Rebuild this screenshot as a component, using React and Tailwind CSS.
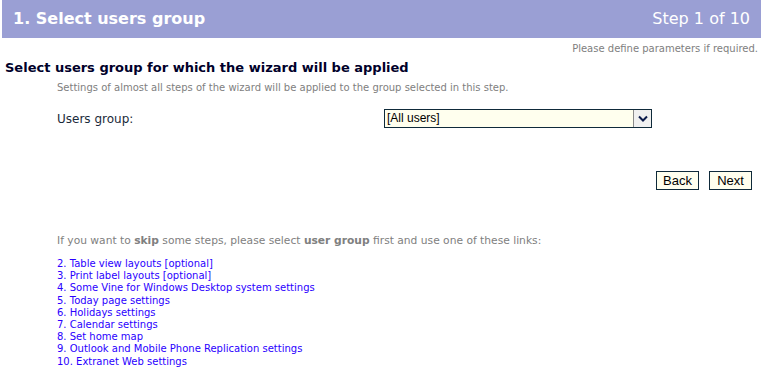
const links = [
  '2. Table view layouts [optional]',
  '3. Print label layouts [optional]',
  '4. Some Vine for Windows Desktop system settings',
  '5. Today page settings',
  '6. Holidays settings',
  '7. Calendar settings',
  '8. Set home map',
  '9. Outlook and Mobile Phone Replication settings',
  '10. Extranet Web settings',
];

export default function App() {
  return (
    <div className="h-[375px] w-[761px] overflow-hidden bg-white font-['DejaVu_Sans',Verdana,sans-serif]">
      <div className="ml-[2px] flex h-[38px] items-center justify-between bg-[#9a9fd4] pl-[11px] pr-[11px] text-white">
        <span className="text-[16px] font-bold">1. Select users group</span>
        <span className="text-[16px]">Step 1 of 10</span>
      </div>
      <div className="pr-[3px] pt-[4px] text-right text-[10px] leading-[13px] text-[#808080]">
        Please define parameters if required.
      </div>
      <h1 className="mt-[5px] pl-[5px] text-[13px] font-bold leading-[16px] text-[#00002a]">
        Select users group for which the wizard will be applied
      </h1>
      <p className="mt-[5px] pl-[57px] text-[10px] leading-[13px] text-[#808080]">
        Settings of almost all steps of the wizard will be applied to the group selected in this step.
      </p>
      <div className="mt-[15px] flex items-center">
        <label className="w-[384px] pl-[57px] text-[12px] text-[#1a2a3a]">Users group:</label>
        <div className="flex h-[19px] w-[268px] items-stretch border border-[#0f2a3a] bg-[#ffffee] font-['Liberation_Sans',Arial,sans-serif]">
          <span className="flex-1 pl-[2px] text-[12px] leading-[17px] text-black">[All users]</span>
          <span className="flex w-[18px] items-center justify-center border-l border-[#8a8a8a] bg-[#f0f0f0]">
            <svg width="10" height="7" viewBox="0 0 10 7" fill="none">
              <path d="M1 1.5 5 5.5 9 1.5" stroke="#0b1a4a" strokeWidth="2" />
            </svg>
          </span>
        </div>
      </div>
      <div className="mt-[43px] flex justify-end gap-[10px] pr-[9px] font-['Liberation_Sans',Arial,sans-serif]">
        <button type="button" className="h-[19px] w-[43px] border border-[#0f2a3a] bg-[#ffffee] text-[13px] leading-[17px] text-black">
          Back
        </button>
        <button type="button" className="h-[19px] w-[43px] border border-[#0f2a3a] bg-[#ffffee] text-[13px] leading-[17px] text-black">
          Next
        </button>
      </div>
      <p className="mt-[44px] pl-[57px] text-[10.7px] leading-[13px] text-[#808080]">
        If you want to <b>skip</b> some steps, please select <b>user group</b> first and use one of these links:
      </p>
      <ul className="mt-[11px] pl-[57px] text-[10px] leading-[12.2px] text-[#2a00ff]">
        {links.map((link) => (
          <li key={link}>
            <a href="#">{link}</a>
          </li>
        ))}
      </ul>
    </div>
  );
}
